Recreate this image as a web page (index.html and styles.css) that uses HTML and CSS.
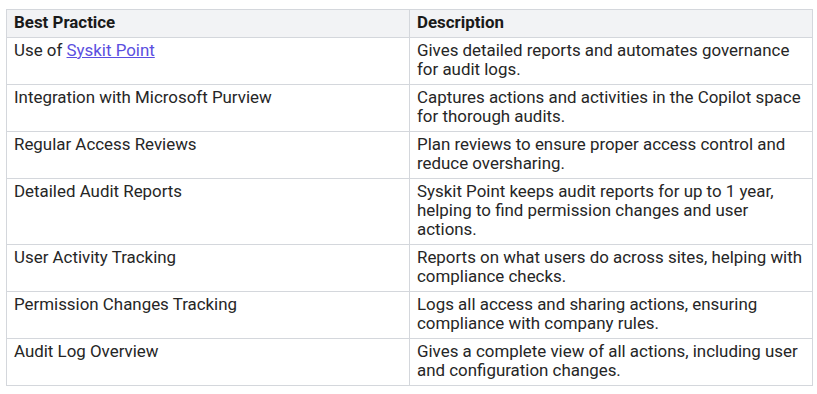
FILE: index.html
```html
<!DOCTYPE html>
<html>
<head>
<meta charset="utf-8">
<link rel="stylesheet" href="styles.css">
</head>
<body>
<table class="bp-table">
  <thead>
    <tr><th class="col-a">Best Practice</th><th>Description</th></tr>
  </thead>
  <tbody>
    <tr><td>Use of <a class="link" href="#">Syskit Point</a></td><td>Gives detailed reports and automates governance for audit logs.</td></tr>
    <tr><td>Integration with Microsoft Purview</td><td>Captures actions and activities in the Copilot space for thorough audits.</td></tr>
    <tr><td>Regular Access Reviews</td><td>Plan reviews to ensure proper access control and reduce oversharing.</td></tr>
    <tr><td>Detailed Audit Reports</td><td>Syskit Point keeps audit reports for up to 1 year, helping to find permission changes and user actions.</td></tr>
    <tr><td>User Activity Tracking</td><td>Reports on what users do across sites, helping with compliance checks.</td></tr>
    <tr><td>Permission Changes Tracking</td><td>Logs all access and sharing actions, ensuring compliance with company rules.</td></tr>
    <tr><td>Audit Log Overview</td><td>Gives a complete view of all actions, including user and configuration changes.</td></tr>
  </tbody>
</table>
</body>
</html>
```
FILE: styles.css
```css
body {
  margin: 0;
  padding: 9px 4px 0 6px;
  background: #fff;
  font-family: Roboto, "Liberation Sans", sans-serif;
  font-size: 16.9px;
  color: #262626;
}
.bp-table {
  width: 807px;
  border-collapse: collapse;
  table-layout: fixed;
}
.bp-table th,
.bp-table td {
  box-sizing: border-box;
  border: 1px solid #d4d7dc;
  padding: 3px 6px 5px 7px;
  text-align: left;
  vertical-align: top;
  line-height: 19px;
}
.bp-table th {
  background: #f2f3f5;
  font-weight: 700;
  color: #1a1a1a;
}
.col-a {
  width: 403px;
}
.link {
  color: #5b4fe0;
  text-decoration: underline;
}
```
